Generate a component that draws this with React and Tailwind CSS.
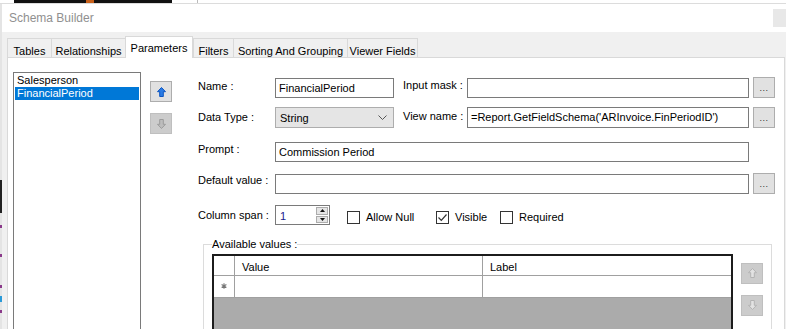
import React from "react";

const tabs = [
  { label: "Tables", cls: "w-[44px]" },
  { label: "Relationships", cls: "w-[74px]" },
  { label: "Parameters", cls: "w-[68px]", active: true },
  { label: "Filters", cls: "w-[40px]" },
  { label: "Sorting And Grouping", cls: "w-[114px]" },
  { label: "Viewer Fields", cls: "w-[71px] border-r" },
];

const BlockArrow = ({ down, fill, stroke }) => (
  <svg width="9" height="10" viewBox="0 0 9 10" className={down ? "rotate-180" : ""}>
    <path
      d="M4.5 0.5 L8.5 4.7 L6.3 4.7 L6.3 9.5 L2.7 9.5 L2.7 4.7 L0.5 4.7 Z"
      fill={fill}
      stroke={stroke}
      strokeWidth="1"
      strokeLinejoin="round"
    />
  </svg>
);

const Box = ({ className = "", children }) => (
  <div
    className={`shrink-0 h-[20px] border border-[#7a7a7a] bg-white flex items-center px-[3px] text-[11px] text-black whitespace-nowrap overflow-hidden ${className}`}
  >
    {children}
  </div>
);

const Dots = () => (
  <div className="shrink-0 ml-[4px] w-[22px] h-[21px] -mt-[1px] border border-[#adadad] bg-[#e1e1e1] flex items-end justify-center pb-[4px] text-[9px] leading-none text-[#333] tracking-[0.5px]">
    ...
  </div>
);

const Check = ({ checked, label, cls }) => (
  <div className={`flex items-center ${cls}`}>
    <div className="w-[13px] h-[13px] border border-[#333] bg-white flex items-center justify-center">
      {checked && (
        <svg width="11" height="11" viewBox="0 0 11 11">
          <path d="M1.5 5.5 L4.3 8.3 L9.5 2.5" fill="none" stroke="#333" strokeWidth="1.2" />
        </svg>
      )}
    </div>
    <span className="ml-[6px] text-[11px]">{label}</span>
  </div>
);

export default function App() {
  return (
    <div className="w-[786px] h-[329px] overflow-hidden bg-[#f0f0f0] flex flex-col font-['Liberation_Sans',Arial,sans-serif] text-black">
      {/* strip of the window behind */}
      <div className="shrink-0 h-[4px] flex bg-white border-b border-[#dcdcdc]">
        <div className="ml-[14px] w-[158px] h-[3px] bg-[#111] flex">
          <div className="ml-[72px] w-[8px] h-[3px] bg-[#c8601a]" />
        </div>
        <div className="ml-[25px] w-px h-[3px] bg-[#bbb]" />
      </div>

      <div className="flex flex-1 min-h-0">
        {/* left edge of the window behind */}
        <div className="shrink-0 w-[2px] flex flex-col bg-[#e4e4e4]">
          <div className="shrink-0 h-[176px]" />
          <div className="shrink-0 h-[33px] bg-[#222]" />
          <div className="shrink-0 h-[12px]" />
          <div className="shrink-0 h-[3px] bg-[#8a3a8a]" />
          <div className="shrink-0 h-[26px]" />
          <div className="shrink-0 h-[3px] bg-[#8a3a8a]" />
          <div className="shrink-0 h-[28px]" />
          <div className="shrink-0 h-[3px] bg-[#8a3a8a]" />
          <div className="shrink-0 h-[8px]" />
          <div className="shrink-0 h-[6px] bg-[#2a9ad8]" />
          <div className="shrink-0 h-[8px]" />
          <div className="shrink-0 h-[3px] bg-[#8a3a8a]" />
        </div>

        {/* window */}
        <div className="flex-1 min-h-0 flex flex-col">
          {/* title bar */}
          <div className="shrink-0 h-[28px] bg-white flex items-center justify-between pl-[7px]">
            <span className="text-[12px] text-[#909090]">Schema Builder</span>
            <div className="w-[13px] h-[18px] bg-[#e8e8e8]" />
          </div>

          {/* body */}
          <div className="flex-1 min-h-0 flex flex-col pt-[4px] pl-[5px] pr-px">
            {/* tabs */}
            <div className="shrink-0 h-[21px] flex items-end">
              {tabs.map((t) =>
                t.active ? (
                  <div
                    key={t.label}
                    className={`${t.cls} shrink-0 h-[22px] -mb-px relative z-10 bg-white border-l border-t border-r border-[#d9d9d9] flex items-start justify-center pt-[3px] text-[11px]`}
                  >
                    {t.label}
                  </div>
                ) : (
                  <div
                    key={t.label}
                    className={`${t.cls} shrink-0 h-[19px] bg-[#f0f0f0] border-l border-t border-[#d9d9d9] flex items-start justify-center pt-[4px] text-[11px]`}
                  >
                    {t.label}
                  </div>
                )
              )}
            </div>

            {/* tab page */}
            <div className="shrink-0 h-[300px] bg-white border border-[#d9d9d9] flex">
              {/* list */}
              <div className="shrink-0 ml-[5px] mt-[14px] w-[128px] h-[300px] border border-[#7a7a7a] p-px">
                <div className="h-[13px] pl-[2px] text-[11px] leading-[13px]">Salesperson</div>
                <div className="h-[13px] pl-[2px] text-[11px] leading-[13px] bg-[#0078d7] text-white">
                  FinancialPeriod
                </div>
              </div>

              {/* move buttons */}
              <div className="shrink-0 ml-[9px] mt-[23px] flex flex-col gap-[11px]">
                <div className="w-[22px] h-[21px] border border-[#adadad] bg-[#e1e1e1] flex items-center justify-center">
                  <BlockArrow fill="#2a7be4" stroke="#0d55c0" />
                </div>
                <div className="w-[22px] h-[21px] border border-[#bfbfbf] bg-[#cccccc] flex items-center justify-center">
                  <BlockArrow down fill="#bdbdbd" stroke="#9c9c9c" />
                </div>
              </div>

              {/* form */}
              <div className="shrink-0 ml-[26px] flex flex-col text-[11px]">
                <div className="mt-[20px] flex items-start">
                  <div className="shrink-0 w-[77px] pt-[2px] leading-[13px]">Name :</div>
                  <Box className="w-[119px]">FinancialPeriod</Box>
                  <div className="shrink-0 ml-[9px] w-[64px] pt-[1px] leading-[13px]">Input mask :</div>
                  <Box className="w-[282px]" />
                  <Dots />
                </div>

                <div className="mt-[9px] flex items-start">
                  <div className="shrink-0 w-[77px] pt-[4px] leading-[13px]">Data Type :</div>
                  <div className="shrink-0 w-[119px] h-[21px] border border-[#adadad] bg-[#e5e5e5] flex items-center justify-between pl-[4px] pr-[6px]">
                    <span className="pt-[1px]">String</span>
                    <svg width="9" height="5" viewBox="0 0 9 5">
                      <path d="M0.5 0.5 L4.5 4.5 L8.5 0.5" fill="none" stroke="#555" strokeWidth="1" />
                    </svg>
                  </div>
                  <div className="shrink-0 ml-[9px] w-[64px] pt-[3px] leading-[13px]">View name :</div>
                  <Box className="w-[282px] h-[21px]">=Report.GetFieldSchema('ARInvoice.FinPeriodID')</Box>
                  <div className="shrink-0 ml-[4px] w-[22px] h-[21px] border border-[#adadad] bg-[#e1e1e1] flex items-end justify-center pb-[4px] text-[9px] leading-none text-[#333] tracking-[0.5px]">
                    ...
                  </div>
                </div>

                <div className="mt-[14px] flex items-start">
                  <div className="shrink-0 w-[77px] pt-[1px] leading-[13px]">Prompt :</div>
                  <Box className="w-[474px]">Commission Period</Box>
                </div>

                <div className="mt-[12px] flex items-start">
                  <div className="shrink-0 w-[77px] leading-[13px]">Default value :</div>
                  <Box className="w-[474px]" />
                  <Dots />
                </div>

                <div className="mt-[11px] flex items-start">
                  <div className="shrink-0 w-[77px] pt-[4px] leading-[13px]">Column span :</div>
                  <div className="shrink-0 w-[55px] h-[20px] border border-[#7a7a7a] bg-white flex">
                    <div className="flex-1 pl-[4px] pt-[2px] text-[11px] text-[#1a1a8c]">1</div>
                    <div className="w-[14px] flex flex-col p-px gap-px">
                      <div className="flex-1 bg-[#e5e5e5] border border-[#acacac] flex items-center justify-center">
                        <svg width="5" height="3" viewBox="0 0 5 3"><path d="M2.5 0 L5 3 L0 3 Z" fill="#111" /></svg>
                      </div>
                      <div className="flex-1 bg-[#e5e5e5] border border-[#acacac] flex items-center justify-center">
                        <svg width="5" height="3" viewBox="0 0 5 3"><path d="M0 0 L5 0 L2.5 3 Z" fill="#111" /></svg>
                      </div>
                    </div>
                  </div>
                  <div className="ml-[17px] mt-[4px] flex">
                    <Check label="Allow Null" cls="w-[89px]" />
                    <Check checked label="Visible" cls="w-[64px]" />
                    <Check label="Required" />
                  </div>
                </div>

                {/* available values group */}
                <fieldset className="shrink-0 mt-[12px] ml-[5px] w-[569px] h-[120px] border border-[#dcdcdc] border-b-0">
                  <legend className="ml-[8px] text-[11px] leading-[13px]">Available values :</legend>
                  <div className="flex mt-[3px]">
                    <div className="shrink-0 ml-[8px] w-[521px] h-[100px] border-2 border-[#1c1c1c] bg-[#ababab] flex flex-col">
                      <div className="shrink-0 h-[20px] flex bg-white border-b border-[#a0a0a0]">
                        <div className="w-[21px] border-r border-[#a0a0a0]" />
                        <div className="w-[248px] border-r border-[#a0a0a0] pl-[7px] pt-[3px]">Value</div>
                        <div className="flex-1 pl-[7px] pt-[3px]">Label</div>
                      </div>
                      <div className="shrink-0 h-[22px] flex bg-white border-b border-[#a0a0a0]">
                        <div className="w-[21px] border-r border-[#a0a0a0] flex items-center justify-center">
                          <svg width="6" height="6" viewBox="0 0 6 6">
                            <path d="M3 0.3 V5.7 M0.6 1.6 L5.4 4.4 M0.6 4.4 L5.4 1.6" stroke="#777" strokeWidth="1.1" />
                          </svg>
                        </div>
                        <div className="w-[248px] border-r border-[#a0a0a0]" />
                        <div className="flex-1" />
                      </div>
                    </div>
                    <div className="shrink-0 ml-[8px] mt-[9px] flex flex-col gap-[11px]">
                      <div className="w-[22px] h-[21px] border border-[#bfbfbf] bg-[#cccccc] flex items-center justify-center">
                        <BlockArrow fill="#e2e2e2" stroke="#b3b3b3" />
                      </div>
                      <div className="w-[22px] h-[21px] border border-[#bfbfbf] bg-[#cccccc] flex items-center justify-center">
                        <BlockArrow down fill="#e2e2e2" stroke="#b3b3b3" />
                      </div>
                    </div>
                  </div>
                </fieldset>
              </div>
            </div>
          </div>
        </div>
      </div>
    </div>
  );
}
